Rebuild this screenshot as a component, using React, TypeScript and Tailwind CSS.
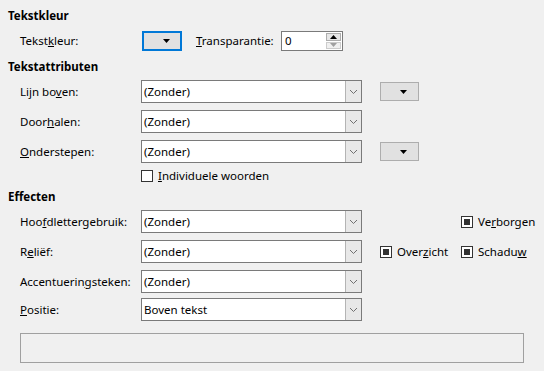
import React from "react";

// Small down chevron used inside the combobox buttons
const Chevron = () => (
    <svg width="9" height="6" viewBox="0 0 9 6" className="block">
        <path d="M1 1 L4.5 4.5 L8 1" fill="none" stroke="#707070" strokeWidth="1" />
    </svg>
);

const Triangle = ({ color = "#000", up = false }: { color?: string; up?: boolean }) => (
    <svg width="7" height="4" viewBox="0 0 7 4" className="block">
        <path d={up ? "M0 4 L3.5 0 L7 4 Z" : "M0 0 L7 0 L3.5 4 Z"} fill={color} />
    </svg>
);

const Combo = ({ value }: { value: string }) => (
    <div className="w-[221px] h-[23px] flex border border-[#7a7a7a] bg-white">
        <span className="flex-1 flex items-center pl-[2px]">{value}</span>
        <div className="w-[16px] h-full flex justify-center items-center bg-[#e8e8e8] border-l border-[#b4b4b4]">
            <Chevron />
        </div>
    </div>
);

const ColorButton = ({ focused = false }: { focused?: boolean }) => (
    <div
        className={
            focused
                ? "w-[40px] h-[20px] flex justify-end items-center pr-[10px] bg-[#e1e1e1] border-2 border-[#0078d7]"
                : "w-[39px] h-[19px] flex justify-end items-center pr-[11px] bg-[#e1e1e1] border border-[#adadad]"
        }
    >
        <Triangle />
    </div>
);

const CheckBox = ({ checked = false }: { checked?: boolean }) => (
    <div className="w-[12px] h-[12px] p-[2px] border border-[#333333] bg-white">
        {checked && <div className="w-full h-full bg-[#333333]" />}
    </div>
);

const Check = ({ checked, children }: { checked?: boolean; children: React.ReactNode }) => (
    <div className="flex items-center gap-[5px]">
        <CheckBox checked={checked} />
        <span>{children}</span>
    </div>
);

const Label = ({ children }: { children: React.ReactNode }) => (
    <span className="w-[121px] shrink-0">{children}</span>
);

const Heading = ({ children }: { children: React.ReactNode }) => (
    <div className="h-[16px] flex items-center font-bold">{children}</div>
);

export default function App() {
    return (
        <div
            className="w-[544px] h-[371px] bg-[#f0f0f0] text-[11.5px] text-[#000000] px-[8px] pt-[8px] flex flex-col"
            style={{ fontFamily: '"Noto Sans", "Open Sans", sans-serif' }}
        >
            {/* Tekstkleur */}
            <Heading>Tekstkleur</Heading>
            <div className="pl-[12px] mt-[7px] h-[20px] flex items-center">
                <Label>Tekst<u>k</u>leur:</Label>
                <div className="ml-[1px]"><ColorButton focused /></div>
                <span className="ml-[14px] w-[85px]"><u>T</u>ransparantie:</span>
                <div className="w-[62px] h-[20px] flex border border-[#7a7a7a] bg-white">
                    <span className="flex-1 flex items-center pl-[3px]">0</span>
                    <div className="w-[17px] flex flex-col p-[1px] gap-[1px]">
                        <div className="flex-1 flex justify-center items-center bg-[#e6e6e6] border border-[#adadad]">
                            <Triangle up />
                        </div>
                        <div className="flex-1 flex justify-center items-center bg-[#f0f0f0] border border-[#cccccc]">
                            <Triangle color="#a0a0a0" />
                        </div>
                    </div>
                </div>
            </div>

            {/* Tekstattributen */}
            <div className="mt-[8px]"><Heading>Tekstattributen</Heading></div>
            <div className="pl-[12px] mt-[5px] flex flex-col gap-[7px]">
                <div className="flex items-center">
                    <Label>Lijn bo<u>v</u>en:</Label>
                    <Combo value="(Zonder)" />
                    <div className="ml-[18px]"><ColorButton /></div>
                </div>
                <div className="flex items-center">
                    <Label>Door<u>h</u>alen:</Label>
                    <Combo value="(Zonder)" />
                </div>
                <div className="flex items-center">
                    <Label><u>O</u>nderstepen:</Label>
                    <Combo value="(Zonder)" />
                    <div className="ml-[18px]"><ColorButton /></div>
                </div>
            </div>
            <div className="pl-[133px] mt-[5px] h-[16px] flex items-center">
                <Check><u>I</u>ndividuele woorden</Check>
            </div>

            {/* Effecten */}
            <div className="mt-[5px]"><Heading>Effecten</Heading></div>
            <div className="pl-[12px] mt-[5px] flex flex-col gap-[7px]">
                <div className="flex items-center">
                    <Label>Hoo<u>f</u>dlettergebruik:</Label>
                    <Combo value="(Zonder)" />
                    <div className="ml-[99px]"><Check checked>Ve<u>r</u>borgen</Check></div>
                </div>
                <div className="flex items-center">
                    <Label>R<u>e</u>liëf:</Label>
                    <Combo value="(Zonder)" />
                    <div className="ml-[18px] w-[81px]"><Check checked>Over<u>z</u>icht</Check></div>
                    <Check checked>Schadu<u>w</u></Check>
                </div>
                <div className="flex items-center">
                    <Label>Accentuerin<u>g</u>steken:</Label>
                    <Combo value="(Zonder)" />
                </div>
            </div>
            <div className="pl-[12px] mt-[5px] flex items-center">
                <Label><u>P</u>ositie:</Label>
                <Combo value="Boven tekst" />
            </div>

            {/* Preview */}
            <div className="ml-[12px] mt-[12px] w-[504px] h-[30px] border border-[#a0a0a0] bg-[#f0f0f0]" />
        </div>
    );
}
